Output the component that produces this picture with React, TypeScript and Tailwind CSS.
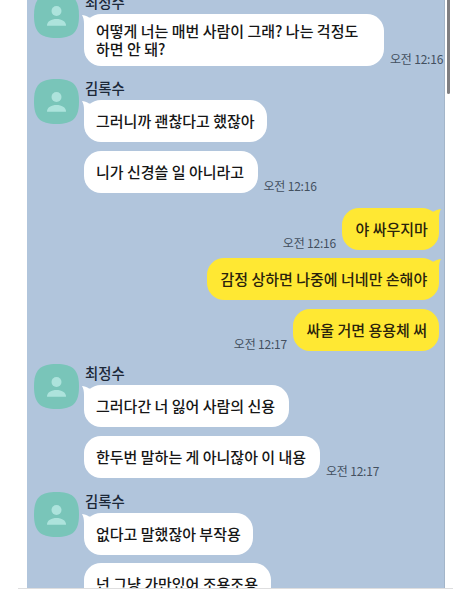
import React from 'react';

interface Message {
  text: string;
  width: string;
  time?: string;
}

interface MessageGroup {
  sender?: string;
  spacing: string;
  messages: Message[];
}

const groups: MessageGroup[] = [
  {
    sender: '최정수',
    spacing: '-mt-[7px]',
    messages: [
      { text: '어떻게 너는 매번 사람이 그래? 나는 걱정도\n하면 안 돼?', width: 'w-[300px] h-[52px]', time: '오전 12:16' },
    ],
  },
  {
    sender: '김록수',
    spacing: 'mt-[13px]',
    messages: [
      { text: '그러니까 괜찮다고 했잖아', width: 'w-[183px] h-[42px]' },
      { text: '니가 신경쓸 일 아니라고', width: 'w-[173.5px] h-[42px]', time: '오전 12:16' },
    ],
  },
  {
    spacing: 'mt-[15px]',
    messages: [
      { text: '야 싸우지마', width: 'w-[97px]', time: '오전 12:16' },
      { text: '감정 상하면 나중에 너네만 손해야', width: 'w-[232px]' },
      { text: '싸울 거면 용용체 써', width: 'w-[146px]', time: '오전 12:17' },
    ],
  },
  {
    sender: '최정수',
    spacing: 'mt-[13.5px]',
    messages: [
      { text: '그러다간 너 잃어 사람의 신용', width: 'w-[205px] h-[42px]' },
      { text: '한두번 말하는 게 아니잖아 이 내용', width: 'w-[236px] h-[42px]', time: '오전 12:17' },
    ],
  },
  {
    sender: '김록수',
    spacing: 'mt-[14px]',
    messages: [
      { text: '없다고 말했잖아 부작용', width: 'w-[169px] h-[42px]' },
      { text: '넌 그냥 가만있어 조용조용', width: 'w-[187px] h-[42px]' },
    ],
  },
];

const Avatar: React.FC = () => (
  <svg className="h-[45px] w-[45px] shrink-0" viewBox="0 0 45 45">
    <path d="M22.5 0C39 0 45 6 45 22.5S39 45 22.5 45 0 39 0 22.5 6 0 22.5 0Z" fill="#79c5b9" />
    <circle cx="22.5" cy="18" r="5" fill="#ade3dc" />
    <path d="M13 32.7c0-4.5 4.5-6.7 9.5-6.7s9.5 2.2 9.5 6.7Z" fill="#ade3dc" />
  </svg>
);

const Time: React.FC<{ children: string }> = ({ children }) => (
  <span className="text-[12px] leading-[14px] tracking-[-0.2px] whitespace-nowrap text-[#43505f]">{children}</span>
);

// Messages from the other people in the room
const ReceivedGroup: React.FC<{ group: MessageGroup }> = ({ group }) => (
  <div className={`flex pl-[7px] ${group.spacing}`}>
    <Avatar />
    <div className="ml-[5px]">
      <div className="h-[21px] pl-[1px] text-[14.4px] leading-[18px] font-medium text-[#1c2838]">{group.sender}</div>
      <div className="flex flex-col gap-[8.5px]">
        {group.messages.map((message, index) => (
          <div key={index} className="flex items-end gap-[6px]">
            <div className={`relative flex items-center rounded-[17px] bg-white pl-[12px] text-[15px] leading-[18px] font-medium whitespace-pre text-[#161616] ${message.width}`}>
              {index === 0 && (
                <svg className="absolute top-0 -left-[2px] h-[18px] w-[18px]" viewBox="0 0 18 18" fill="#ffffff">
                  <path d="M0 1C2 1 5 2.2 7 3.4L14 4 6 17H2V10C2 6 1.5 3.5 0 1Z" />
                </svg>
              )}
              <span className="relative">{message.text}</span>
            </div>
            {message.time && <Time>{message.time}</Time>}
          </div>
        ))}
      </div>
    </div>
  </div>
);

// Own messages, aligned to the right edge
const SentGroup: React.FC<{ group: MessageGroup }> = ({ group }) => (
  <div className={`flex flex-col gap-[8.5px] pr-[5px] ${group.spacing}`}>
    {group.messages.map((message, index) => (
      <div key={index} className="flex items-end justify-end gap-[6px]">
        {message.time && <Time>{message.time}</Time>}
        <div className={`relative flex h-[42px] items-center rounded-[17px] bg-[#ffe833] pl-[13.5px] text-[15px] leading-[18px] font-medium whitespace-pre text-[#2a230c] ${message.width}`}>
          {index < 2 && (
            <svg className="absolute top-0 -right-[2px] h-[18px] w-[18px]" viewBox="0 0 18 18" fill="#ffe833">
              <path d="M18 1C16 1 13 2.2 11 3.4L4 4 12 17H16V10C16 6 16.5 3.5 18 1Z" />
            </svg>
          )}
          <span className="relative">{message.text}</span>
        </div>
      </div>
    ))}
  </div>
);

const ChatRoom: React.FC = () => {
  return (
    <div className="h-[590px] w-[472px] overflow-hidden bg-white font-['Noto_Sans_CJK_KR',sans-serif]">
      <div className="flex h-[588px] pl-[27px]">
        <div className="flex h-full w-[418px] shrink-0 flex-col overflow-hidden border-r border-[#a3b5c9] bg-[#b1c5dc]">
          {groups.map((group, index) =>
            group.sender ? <ReceivedGroup key={index} group={group} /> : <SentGroup key={index} group={group} />
          )}
        </div>
        {/* Scrollbar */}
        <div className="ml-[2px] h-[94px] w-[3px] rounded-b-sm bg-[#807f82]" />
      </div>
      <div className="ml-[18px] h-px w-[435px] bg-[#dededf]" />
    </div>
  );
};

export default ChatRoom;
